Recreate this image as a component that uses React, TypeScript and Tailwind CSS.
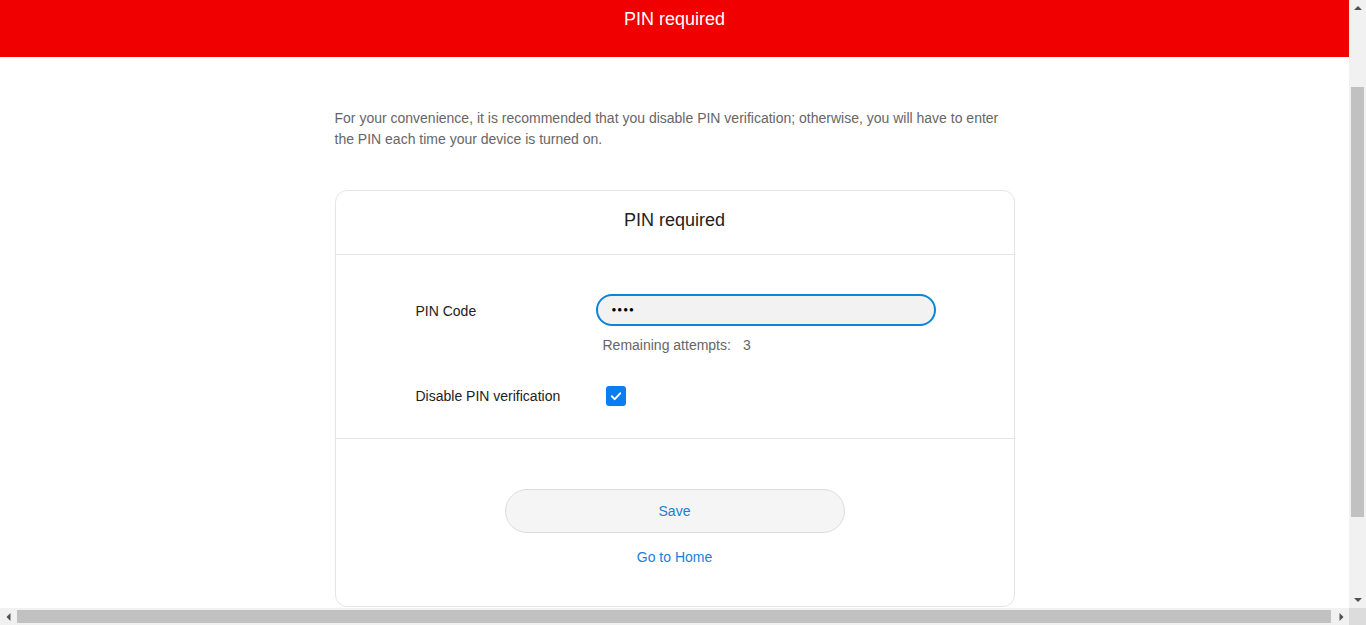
const font = { fontFamily: '"Liberation Sans", Arial, sans-serif' };

const ScrollArrow = ({ dir }: { dir: "up" | "down" | "left" | "right" }) => {
  const pts = {
    up: "4,7 8,3 12,7",
    down: "4,4 8,8 12,4",
    left: "7,4 3,8 7,12",
    right: "4,4 8,8 4,12",
  }[dir];
  const vertical = dir === "up" || dir === "down";
  return (
    <div className="w-[17px] h-[17px] flex items-center justify-center">
      <svg width="16" height={vertical ? 11 : 16} viewBox={vertical ? "0 0 16 11" : "0 0 11 16"}>
        <polygon points={pts} fill="#505050" />
      </svg>
    </div>
  );
};

export default function App() {
  return (
    <div className="w-screen h-screen flex flex-col overflow-hidden bg-white" style={font}>
      <div className="flex flex-1 min-h-0">
        <div className="flex-1 min-w-0 overflow-hidden">
          <div className="h-[57px] bg-[#f00000] pt-[7px] text-center text-white text-lg leading-6">PIN required</div>

          <div className="w-[680px] mx-auto">
            <p className="mt-[51px] text-sm leading-[21px] text-[#666666]">
              For your convenience, it is recommended that you disable PIN verification; otherwise, you will have to enter
              the PIN each time your device is turned on.
            </p>

            <div className="mt-[40px] border border-[#e5e5e5] rounded-[12px] h-[417px]">
              <div className="h-[64px] pt-[17px] text-center text-lg leading-6 text-[#222222] border-b border-[#e5e5e5]">
                PIN required
              </div>

              <div className="pl-[80px] pt-[39px] pb-[32px] border-b border-[#e5e5e5]">
                <div className="flex items-center">
                  <label className="w-[180px] text-sm text-[#222222] pt-[1px]">PIN Code</label>
                  <div className="w-[340px] h-[32px] rounded-full border-2 border-[#0b85d9] bg-[#f2f2f2] flex items-center pl-[14px]">
                    <span className="text-[8px] tracking-[1px] text-black leading-none">●●●●</span>
                  </div>
                </div>
                <div className="ml-[187px] mt-[9px] text-sm leading-5 text-[#666666]">
                  Remaining attempts:<span className="ml-[12px]">3</span>
                </div>
                <div className="flex items-center mt-[31px]">
                  <label className="w-[190px] text-sm text-[#222222]">Disable PIN verification</label>
                  <div className="w-[20px] h-[20px] rounded-[3px] bg-[#0a7df0] flex items-center justify-center">
                    <svg width="14" height="14" viewBox="0 0 14 14">
                      <path d="M2.8 7.3 L5.8 10.2 L11.2 4.3" stroke="white" strokeWidth="1.9" fill="none" strokeLinecap="round" strokeLinejoin="round" />
                    </svg>
                  </div>
                </div>
              </div>

              <div className="flex flex-col items-center pt-[50px]">
                <button className="w-[340px] h-[44px] rounded-full border border-[#dddddd] bg-[#f5f5f5] text-sm text-[#1a7fd6]">
                  Save
                </button>
                <a className="mt-[14px] text-sm leading-5 text-[#1a7fd6]">Go to Home</a>
              </div>
            </div>
          </div>
        </div>

        <div className="w-[17px] bg-[#f1f1f1] flex flex-col">
          <ScrollArrow dir="up" />
          <div className="mt-[70px] mx-[2px] h-[430px] bg-[#c1c1c1]" />
          <div className="flex-1" />
          <ScrollArrow dir="down" />
        </div>
      </div>

      <div className="h-[17px] flex bg-[#f1f1f1]">
        <ScrollArrow dir="left" />
        <div className="w-[1314px] my-[2px] bg-[#c1c1c1]" />
        <div className="flex-1" />
        <ScrollArrow dir="right" />
        <div className="w-[17px] bg-[#dcdcdc]" />
      </div>
    </div>
  );
}
